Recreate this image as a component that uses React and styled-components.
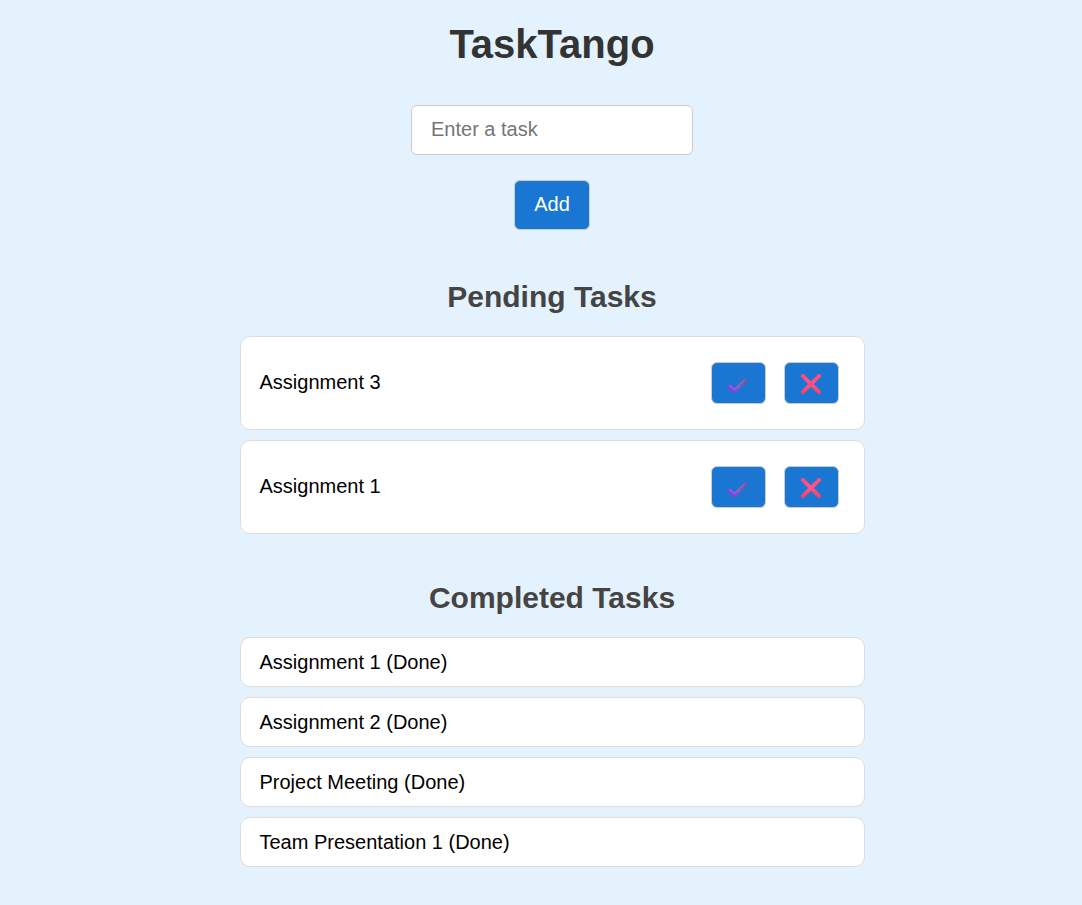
import React, { useState } from "react";
import styled, { createGlobalStyle, css } from "styled-components";

const GlobalStyle = createGlobalStyle`
  * {
    box-sizing: border-box;
  }

  body {
    margin: 0;
    min-height: 100vh;
    background: #e3f2fd;
    color: #000;
    font-family: Arial, "Liberation Sans", sans-serif;
    font-size: 20px;
    line-height: 24px;
  }
`;

const Page = styled.main`
  display: flex;
  flex-direction: column;
  align-items: center;
  padding: 20px 0 36px 22px;
`;

const Title = styled.h1`
  margin: 0 0 37px;
  color: #333;
  font-size: 40px;
  line-height: 48px;
`;

const TaskForm = styled.form`
  display: flex;
  flex-direction: column;
  align-items: center;
  gap: 25px;
  width: 100%;
  margin-bottom: 48px;
`;

const field = css`
  height: 50px;
  padding: 0 19px 2px;
  border: 1px solid #ccc;
  border-radius: 6px;
  font: inherit;
`;

const TaskInput = styled.input`
  ${field}
  width: 282px;
  max-width: 100%;
  background: #fff;

  &::placeholder {
    color: #757575;
  }
`;

const AddButton = styled.button`
  ${field}
  background: #1976d2;
  color: #fff;
  cursor: pointer;
`;

const Section = styled.section`
  width: 100%;
  max-width: 625px;
  margin-bottom: 45px;

  &:last-child {
    margin-bottom: 0;
  }
`;

const SectionTitle = styled.h2`
  margin: 0 0 20px;
  color: #444;
  font-size: 30px;
  line-height: 38px;
  text-align: center;
`;

const TaskList = styled.ul`
  display: flex;
  flex-direction: column;
  gap: 10px;
  margin: 0;
  padding: 0;
  list-style: none;
`;

const TaskItem = styled.li`
  display: flex;
  align-items: center;
  justify-content: space-between;
  min-height: 50px;
  padding: ${({ $roomy }) => ($roomy ? "25px 25px 25px 19px" : "0 19px")};
  border: 1px solid #ddd;
  border-radius: 10px;
  background: #fff;
`;

const TaskName = styled.span`
  padding-bottom: 2px;
`;

const Actions = styled.div`
  display: flex;
  gap: 18px;
`;

const ActionButton = styled.button`
  display: flex;
  align-items: center;
  justify-content: center;
  width: 55px;
  height: 42px;
  padding: 2px 0 0;
  border: 1px solid #ccc;
  border-radius: 6px;
  background: #1976d2;
  cursor: pointer;
`;

function CheckIcon() {
  return (
    <svg width="24" height="24" viewBox="0 0 24 24" fill="none" aria-hidden="true">
      <defs>
        <linearGradient id="check" x1="7" y1="20" x2="16" y2="7" gradientUnits="userSpaceOnUse">
          <stop stopColor="#8f3ae6" />
          <stop offset="0.45" stopColor="#7c5cc4" />
          <stop offset="1" stopColor="#6c58a6" />
        </linearGradient>
      </defs>
      <path d="M3.8 14.6 8.7 18.8 19.8 8.2" stroke="url(#check)" strokeWidth="4.2" strokeLinecap="round" strokeLinejoin="round" />
      <path d="M3.8 13.8 8.5 17.4 18.7 7.8" stroke="#9488d4" strokeOpacity="0.5" strokeWidth="1.2" strokeLinecap="round" />
    </svg>
  );
}

function CrossIcon() {
  return (
    <svg width="24" height="24" viewBox="0 0 24 24" fill="none" aria-hidden="true">
      <defs>
        <linearGradient id="cross" x1="12" y1="2" x2="12" y2="22" gradientUnits="userSpaceOnUse">
          <stop stopColor="#ff477a" />
          <stop offset="0.5" stopColor="#ff5687" />
          <stop offset="1" stopColor="#f33f62" />
        </linearGradient>
      </defs>
      <path d="M3.8 3.8 20.2 20.2M20.2 3.8 3.8 20.2" stroke="url(#cross)" strokeWidth="4" strokeLinecap="round" />
    </svg>
  );
}

export default function App() {
  const [draft, setDraft] = useState("");
  const [pending, setPending] = useState(["Assignment 3", "Assignment 1"]);
  const [completed, setCompleted] = useState([
    "Assignment 1",
    "Assignment 2",
    "Project Meeting",
    "Team Presentation 1",
  ]);

  const removeTask = (index) => setPending(pending.filter((_, i) => i !== index));

  const addTask = (event) => {
    event.preventDefault();
    if (!draft.trim()) return;
    setPending([...pending, draft.trim()]);
    setDraft("");
  };

  const completeTask = (index) => {
    setCompleted([...completed, pending[index]]);
    removeTask(index);
  };

  return (
    <>
      <GlobalStyle />
      <Page>
        <Title>TaskTango</Title>
        <TaskForm onSubmit={addTask}>
          <TaskInput
            type="text"
            aria-label="Enter a task"
            placeholder="Enter a task"
            value={draft}
            onChange={(event) => setDraft(event.target.value)}
          />
          <AddButton type="submit">Add</AddButton>
        </TaskForm>
        <Section>
          <SectionTitle>Pending Tasks</SectionTitle>
          <TaskList>
            {pending.map((task, index) => (
              <TaskItem key={index} $roomy>
                <TaskName>{task}</TaskName>
                <Actions>
                  <ActionButton type="button" aria-label={`Complete ${task}`} onClick={() => completeTask(index)}>
                    <CheckIcon />
                  </ActionButton>
                  <ActionButton type="button" aria-label={`Delete ${task}`} onClick={() => removeTask(index)}>
                    <CrossIcon />
                  </ActionButton>
                </Actions>
              </TaskItem>
            ))}
          </TaskList>
        </Section>
        <Section>
          <SectionTitle>Completed Tasks</SectionTitle>
          <TaskList>
            {completed.map((task, index) => (
              <TaskItem key={index}>{task} (Done)</TaskItem>
            ))}
          </TaskList>
        </Section>
      </Page>
    </>
  );
}
